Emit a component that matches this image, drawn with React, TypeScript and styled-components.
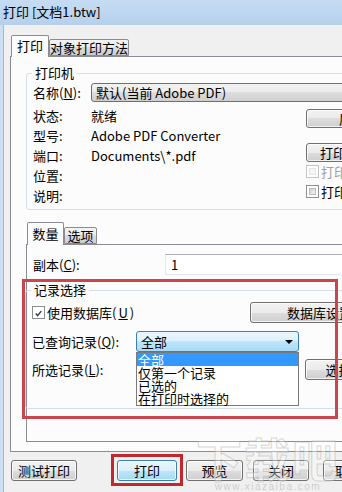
import React from "react";
import styled, { createGlobalStyle } from "styled-components";

const GlobalStyle = createGlobalStyle`
	html, body {
		margin: 0;
		padding: 0;
		overflow: hidden;
		background: #f0f0f0;
	}
	body {
		font-family: "Noto Sans CJK SC", "Liberation Sans", sans-serif;
		font-size: 13px;
		color: #000;
	}
	* {
		box-sizing: border-box;
	}
`;

const Window = styled.div`
	position: relative;
	width: 342px;
	height: 492px;
	overflow: hidden;
	background: #f0f0f0;
	display: flex;
	flex-direction: column;
`;

const TitleBar = styled.div`
	flex: none;
	height: 25px;
	padding-left: 3px;
	line-height: 24px;
	white-space: nowrap;
	background: linear-gradient(#c6dcf3, #bcd5ef 60%, #b6d0ec);
`;

const Client = styled.div`
	flex: 1;
	display: flex;
	flex-direction: column;
	border-left: 3px solid #cddff2;
	box-shadow: inset 1px 0 0 #a7b6c6;
	padding: 10px 0 0 7px;
`;

const TabStrip = styled.div<{ $h: number }>`
	position: relative;
	z-index: 1;
	display: flex;
	align-items: flex-end;
	height: ${({ $h }) => $h}px;
	margin-bottom: -1px;
	padding-left: 1px;
`;

const Tab = styled.div<{ $w: number; $active?: boolean; $h?: number }>`
	flex: none;
	width: ${({ $w }) => $w}px;
	height: ${({ $active, $h }) => ($active ? `${$h}px` : "17px")};
	margin-bottom: ${({ $active }) => ($active ? "0" : "1px")};
	border: 1px solid #898c95;
	border-bottom: ${({ $active }) => ($active ? "none" : "1px solid #898c95")};
	border-radius: 2px 2px 0 0;
	background: ${({ $active }) =>
		$active
			? "#fcfcfc"
			: "linear-gradient(#f3f3f3, #ebebeb 50%, #dcdcdc 50%, #cfcfcf)"};
	text-align: center;
	line-height: ${({ $active, $h }) => ($active ? `${($h ?? 22) - 2}px` : "15px")};
	white-space: nowrap;
`;

const Panel = styled.div<{ $w: number; $h: number }>`
	flex: none;
	width: ${({ $w }) => $w}px;
	height: ${({ $h }) => $h}px;
	border: 1px solid #898c95;
	background: #fcfcfc;
`;

const OuterPanel = styled(Panel)`
	padding: 8px 0 0 15px;
`;

const InnerPanel = styled(Panel)`
	padding-top: 9px;
`;

const Group = styled.fieldset<{ $mt?: number; $ml?: number; $w: number }>`
	margin: ${({ $mt }) => $mt ?? 0}px 0 0 ${({ $ml }) => $ml ?? 0}px;
	padding: 0;
	min-width: 0;
	width: ${({ $w }) => $w}px;
	border: 1px solid #d5dfe5;
	border-radius: 3px;
`;

const Legend = styled.legend`
	margin-left: 5px;
	padding: 0 3px;
	line-height: 16px;
	height: 16px;
`;

const PrinterGrid = styled.div`
	display: grid;
	grid-template-columns: 58px 215px 120px;
	grid-template-rows: 23px repeat(5, 20px);
	padding: 2px 0 3px 6px;
`;

const Label = styled.div`
	line-height: 19px;
	white-space: nowrap;
`;

const Value = styled.div`
	line-height: 20px;
	white-space: nowrap;
`;

const Combo = styled.div<{ $focus?: boolean; $h: number; $w?: number }>`
	position: relative;
	display: flex;
	align-items: center;
	justify-content: space-between;
	height: ${({ $h }) => $h}px;
	width: ${({ $w }) => ($w ? `${$w}px` : "auto")};
	padding: 0 5px 0 4px;
	border: 1px solid ${({ $focus }) => ($focus ? "#3c7fb1" : "#707070")};
	border-radius: 3px;
	background: ${({ $focus }) =>
		$focus
			? "linear-gradient(#eaf6fd, #d9f0fc 50%, #bee6fd 50%, #a7d9f5)"
			: "linear-gradient(#f2f2f2, #ebebeb 50%, #dddddd 50%, #cfcfcf)"};
	white-space: nowrap;
`;

const NameCombo = styled(Combo)`
	grid-column: 2 / span 2;
`;

const Arrow = styled.span`
	width: 0;
	height: 0;
	border-left: 4px solid transparent;
	border-right: 4px solid transparent;
	border-top: 4px solid #000;
`;

const SideColumn = styled.div`
	grid-column: 3;
	grid-row: 2 / span 5;
	display: flex;
	flex-direction: column;
	align-items: flex-start;
`;

const Button = styled.div<{ $w: number; $h?: number; $primary?: boolean; $mt?: number; $ml?: number }>`
	flex: none;
	display: flex;
	align-items: center;
	justify-content: center;
	width: ${({ $w }) => $w}px;
	height: ${({ $h }) => $h ?? 21}px;
	margin-top: ${({ $mt }) => $mt ?? 0}px;
	margin-left: ${({ $ml }) => $ml ?? 0}px;
	border: 1px solid ${({ $primary }) => ($primary ? "#3c7fb1" : "#707070")};
	border-radius: 3px;
	background: ${({ $primary }) =>
		$primary
			? "linear-gradient(#eaf6fd, #d9f0fc 50%, #bee6fd 50%, #a7d9f5)"
			: "linear-gradient(#f2f2f2, #ebebeb 50%, #dddddd 50%, #cfcfcf)"};
	box-shadow: inset 0 0 0 1px rgba(255, 255, 255, 0.75);
	white-space: nowrap;
	overflow: hidden;
`;

const CheckRow = styled.div<{ $mt?: number; $w?: number; $disabled?: boolean }>`
	display: flex;
	align-items: center;
	gap: 2px;
	height: 16px;
	margin-top: ${({ $mt }) => $mt ?? 0}px;
	width: ${({ $w }) => ($w ? `${$w}px` : "auto")};
	color: ${({ $disabled }) => ($disabled ? "#a0a0a0" : "#000")};
	white-space: nowrap;
`;

const Box = styled.span<{ $disabled?: boolean }>`
	flex: none;
	position: relative;
	width: 13px;
	height: 13px;
	border: 1px solid ${({ $disabled }) => ($disabled ? "#c5c5c5" : "#8e8f8f")};
	background: #fff;
	padding: 2px;
	display: flex;
`;

const BoxFill = styled.span<{ $disabled?: boolean }>`
	flex: 1;
	background: ${({ $disabled }) =>
		$disabled ? "#f4f4f4" : "linear-gradient(135deg, #cbcfd5, #f6f6f6)"};
	border: 1px solid ${({ $disabled }) => ($disabled ? "#e6e6e6" : "#b8bcc2")};
`;

const Check = ({ disabled, checked }: { disabled?: boolean; checked?: boolean }) => (
	<Box $disabled={disabled}>
		{checked ? (
			<svg width="9" height="9" viewBox="0 0 9 9">
				<path d="M1 4.6 L3.4 7.2 L8 1.4" fill="none" stroke="#2b3f63" strokeWidth="1.9" />
			</svg>
		) : (
			<BoxFill $disabled={disabled} />
		)}
	</Box>
);

const FieldRow = styled.div<{ $mt?: number; $pl?: number }>`
	display: flex;
	align-items: center;
	height: 21px;
	margin-top: ${({ $mt }) => $mt ?? 0}px;
	padding-left: ${({ $pl }) => $pl ?? 0}px;
`;

const RowLabel = styled.div<{ $w: number }>`
	flex: none;
	width: ${({ $w }) => $w}px;
	white-space: nowrap;
`;

const TextInput = styled.div`
	flex: none;
	width: 220px;
	height: 21px;
	padding-left: 5px;
	line-height: 19px;
	background: #fff;
	border: 1px solid #e3e9ef;
	border-top-color: #abadb3;
`;

const Mark = styled.div<{ $w: number; $h: number; $color: string }>`
	position: relative;
	flex: none;
	width: ${({ $w }) => $w}px;
	height: ${({ $h }) => $h}px;

	&::after {
		content: "";
		position: absolute;
		inset: 0;
		z-index: 3;
		border: 3px solid ${({ $color }) => $color};
		pointer-events: none;
	}
`;

const RecordMark = styled(Mark)`
	margin: 4px 0 0 -5px;
	padding: 3px 0 0 3px;
`;

const ButtonMark = styled(Mark)`
	display: flex;
	align-items: center;
	justify-content: center;
	margin-left: 34px;
`;

const RecordRows = styled.div`
	padding: 4px 0 28px 6px;
`;

const ComboWrap = styled.div`
	position: relative;
	flex: none;
`;

const DropList = styled.ul`
	position: absolute;
	z-index: 5;
	top: 100%;
	left: 0;
	width: 163px;
	margin: 0;
	padding: 0;
	list-style: none;
	background: #fff;
	border: 1px solid #7a7a7a;
`;

const DropItem = styled.li<{ $selected?: boolean }>`
	height: 13px;
	line-height: 13px;
	padding-left: 1px;
	white-space: nowrap;
	background: ${({ $selected }) => ($selected ? "#3399ff" : "transparent")};
	color: ${({ $selected }) => ($selected ? "#fff" : "#000")};
`;

const Spacer = styled.div<{ $w: number }>`
	flex: none;
	width: ${({ $w }) => $w}px;
`;

const ButtonRow = styled.div`
	display: flex;
	align-items: center;
	height: 32px;
	margin-top: 2px;
	padding-left: 1px;
`;

const Watermark = styled.div`
	position: absolute;
	right: 2px;
	bottom: 0;
	z-index: 4;
	display: flex;
	flex-direction: column;
	align-items: center;
	pointer-events: none;
	color: rgba(255, 255, 255, 0.35);
`;

const WatermarkLogo = styled.div`
	font-size: 46px;
	font-weight: 700;
	line-height: 50px;
	letter-spacing: 2px;
	-webkit-text-stroke: 1px rgba(170, 170, 170, 0.45);
`;

const WatermarkUrl = styled.div`
	font-family: "Liberation Sans", sans-serif;
	font-size: 10px;
	line-height: 10px;
	letter-spacing: 1.5px;
	color: rgba(150, 150, 150, 0.4);
`;

const App = () => (
	<>
		<GlobalStyle />
		<Window>
			<TitleBar>打印 [文档1.btw]</TitleBar>
			<Client>
				<TabStrip $h={22}>
					<Tab $w={38} $active $h={22}>
						打印
					</Tab>
					<Tab $w={80}>对象打印方法</Tab>
				</TabStrip>
				<OuterPanel $w={420} $h={396}>
					<Group $w={400}>
						<Legend>打印机</Legend>
						<PrinterGrid>
							<Label>
								名称(<u>N</u>):
							</Label>
							<NameCombo $h={19}>
								<span>默认(当前 Adobe PDF)</span>
								<Arrow />
							</NameCombo>
							<Value>状态:</Value>
							<Value>就绪</Value>
							<SideColumn>
								<Button $w={120} $h={19} $mt={3}>
									属性(R)...
								</Button>
								<Button $w={120} $h={19} $mt={15}>
									打印首选项(F)...
								</Button>
								<CheckRow $mt={1} $disabled>
									<Check disabled />
									打印到文件
								</CheckRow>
								<CheckRow $mt={4}>
									<Check />
									打印为位图
								</CheckRow>
							</SideColumn>
							<Value>型号:</Value>
							<Value>Adobe PDF Converter</Value>
							<Value>端口:</Value>
							<Value>Documents\*.pdf</Value>
							<Value>位置:</Value>
							<Value />
							<Value>说明:</Value>
							<Value />
						</PrinterGrid>
					</Group>

					<TabStrip $h={23} style={{ marginTop: 12 }}>
						<Tab $w={37} $active $h={23}>
							数量
						</Tab>
						<Tab $w={33}>选项</Tab>
					</TabStrip>
					<InnerPanel $w={390} $h={198}>
						<FieldRow $pl={6}>
							<RowLabel $w={132}>
								副本(<u>C</u>):
							</RowLabel>
							<TextInput>1</TextInput>
						</FieldRow>

						<RecordMark $w={316} $h={140} $color="#c9474c">
							<Group $w={380}>
								<Legend>记录选择</Legend>
								<RecordRows>
									<FieldRow>
										<CheckRow $w={218}>
											<Check checked />
											使用数据库(<u>U</u>)
										</CheckRow>
										<Button $w={150}>数据库设置...</Button>
									</FieldRow>
									<FieldRow $mt={8}>
										<RowLabel $w={104}>
											已查询记录(<u>Q</u>):
										</RowLabel>
										<ComboWrap>
											<Combo $focus $h={21} $w={163}>
												<span>全部</span>
												<Arrow />
											</Combo>
											<DropList>
												<DropItem $selected>全部</DropItem>
												<DropItem>仅第一个记录</DropItem>
												<DropItem>已选的</DropItem>
												<DropItem>在打印时选择的</DropItem>
											</DropList>
										</ComboWrap>
									</FieldRow>
									<FieldRow $mt={7}>
										<RowLabel $w={104}>
											所选记录(<u>L</u>):
										</RowLabel>
										<Spacer $w={169} />
										<Button $w={78}>选择...</Button>
									</FieldRow>
								</RecordRows>
							</Group>
						</RecordMark>
					</InnerPanel>
				</OuterPanel>

				<ButtonRow>
					<Button $w={66}>测试打印</Button>
					<ButtonMark $w={72} $h={32} $color="#c0282e">
						<Button $w={60} $primary>
							打印
						</Button>
					</ButtonMark>
					<Button $w={57} $ml={3}>
						预览
					</Button>
					<Button $w={56} $ml={10}>
						关闭
					</Button>
					<Button $w={50} $ml={14}>
						取消
					</Button>
				</ButtonRow>
			</Client>
			<Watermark>
				<WatermarkLogo>下载吧</WatermarkLogo>
				<WatermarkUrl>www.xiazaiba.com</WatermarkUrl>
			</Watermark>
		</Window>
	</>
);

export default App;
